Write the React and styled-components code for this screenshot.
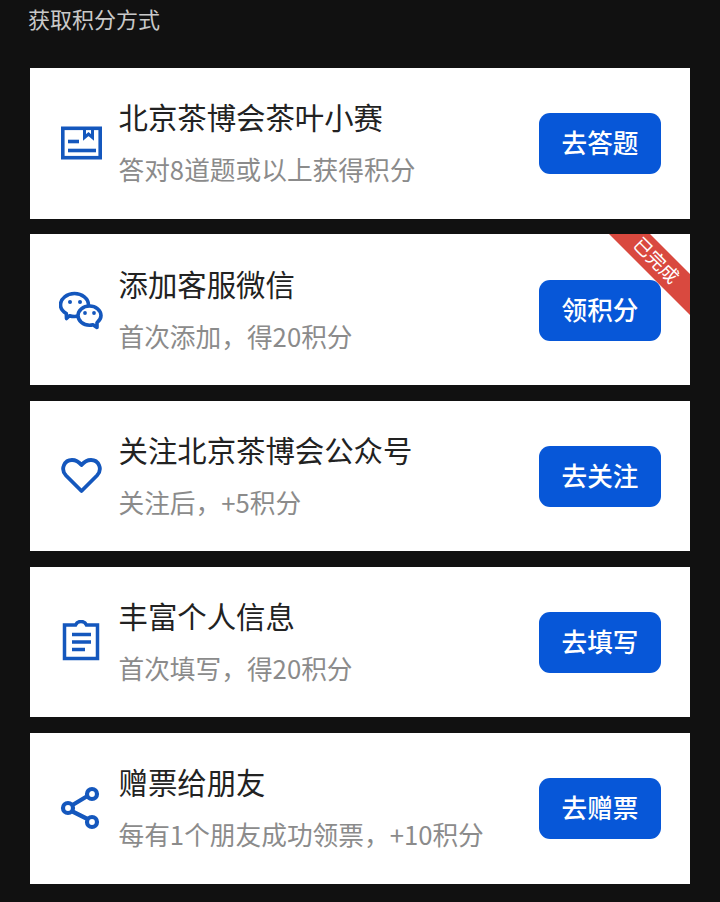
import styled, { createGlobalStyle } from 'styled-components'

const GlobalStyle = createGlobalStyle`
  html, body {
    margin: 0;
    padding: 0;
    background: #111111;
  }
  body {
    font-family: "Noto Sans CJK SC", "Noto Sans", sans-serif;
  }
`

const Page = styled.div`
  width: 720px;
  height: 902px;
  overflow: hidden;
  background: #111111;
  box-sizing: border-box;
  padding: 0 30px;
`

const Heading = styled.div`
  height: 68px;
  padding-top: 2px;
  box-sizing: border-box;
  margin-left: -2px;
  font-size: 22px;
  line-height: 32px;
  color: #c9c9c9;
`

const List = styled.div`
  display: flex;
  flex-direction: column;
  gap: 15.75px;
`

const Card = styled.div`
  position: relative;
  overflow: hidden;
  height: 150.5px;
  background: #ffffff;
  display: flex;
  align-items: center;
  padding: 0 29px;
  box-sizing: border-box;
`

const IconSlot = styled.div`
  flex: none;
  width: 44px;
  height: 44px;
  margin-right: 15.5px;
  color: #1457bd;
  svg {
    display: block;
  }
`

const Info = styled.div`
  flex: 1;
  min-width: 0;
  display: flex;
  flex-direction: column;
  gap: 11px;
  padding-bottom: 1px;
`

const Title = styled.div`
  font-size: 29.4px;
  line-height: 42px;
  color: #222222;
  white-space: nowrap;
`

const Sub = styled.div`
  font-size: 25.7px;
  line-height: 42px;
  color: #8b8b8b;
  white-space: nowrap;
`

const Action = styled.button`
  flex: none;
  width: 122px;
  height: 61px;
  margin-top: 1px;
  border: 0;
  border-radius: 11px;
  padding: 0 0 4px;
  background: #0757d8;
  color: #ffffff;
  font-family: inherit;
  font-size: 25.6px;
  font-weight: 500;
  line-height: 57px;
`

const Ribbon = styled.div`
  position: absolute;
  top: 15.5px;
  right: -29.5px;
  width: 120px;
  height: 29px;
  padding-right: 11px;
  box-sizing: border-box;
  background: #d9493f;
  color: #ffffff;
  font-size: 18.5px;
  line-height: 26px;
  text-align: center;
  transform: rotate(45deg);
`

const BookIcon = () => (
  <svg width="44" height="44" viewBox="0 0 44 44" fill="none" stroke="currentColor" strokeWidth="3.6">
    <rect x="3.8" y="7.3" width="37.4" height="29.4" />
    <path d="M25.5 7 V16.5 L29.5 13 L33.5 16.5 V7" strokeWidth="3" />
    <path d="M9 20.5 H20" />
    <path d="M9 29.5 H37" />
  </svg>
)

const WechatIcon = () => (
  <svg width="44" height="44" viewBox="0 0 44 44" fill="none" stroke="currentColor" strokeWidth="3.6" strokeLinejoin="round">
    <path d="M15.5 5.5 C23 5.5 29.5 10.5 29.5 17 C29.5 23.5 23 28.5 15.5 28.5 C13.5 28.5 12 28.2 10.5 27.7 L7.5 30.5 L7.3 25.5 C3.7 23.3 1.5 20.3 1.5 17 C1.5 10.5 8 5.5 15.5 5.5 Z" />
    <path d="M30.5 18 C36.8 18 42 22.4 42 27.6 C42 30.4 40.5 32.8 38 34.6 L38 39.5 L34 36.7 C32.9 37 31.7 37.2 30.5 37.2 C24.2 37.2 19 32.9 19 27.6 C19 22.4 24.2 18 30.5 18 Z" fill="#ffffff" />
    <g fill="currentColor" stroke="none">
      <circle cx="11" cy="14" r="2" />
      <circle cx="21" cy="14" r="2" />
      <circle cx="26" cy="25" r="1.9" />
      <circle cx="35" cy="25" r="1.9" />
    </g>
  </svg>
)

const HeartIcon = () => (
  <svg width="44" height="44" viewBox="0 0 44 44" fill="none" stroke="currentColor" strokeWidth="3.8" strokeLinejoin="round">
    <path d="M22.5 37 L7 21.5 C1 15 5.5 6 13 6 C17 6 20 8 22.5 11 C25 8 28 6 32 6 C39.5 6 44 15 38 21.5 Z" />
  </svg>
)

const ClipboardIcon = () => (
  <svg width="44" height="44" viewBox="0 0 44 44" fill="none" stroke="currentColor" strokeWidth="3.5">
    <path d="M5.5 5 H16.5 C17.5 2.8 19.5 1.5 22 1.5 C24.5 1.5 26.5 2.8 27.5 5 H38.5 V38.5 H5.5 Z" />
    <path d="M13 14.5 H32 M13 22 H32 M13 29.5 H26" strokeWidth="3.6" />
  </svg>
)

const ShareIcon = () => (
  <svg width="44" height="44" viewBox="0 0 44 44" fill="none" stroke="currentColor" strokeWidth="4.2">
    <path d="M13.5 19 L28.5 10 M13.5 25.5 L28.5 33" />
    <circle cx="33" cy="8" r="5" />
    <circle cx="9" cy="22" r="5" />
    <circle cx="33" cy="36" r="5" />
  </svg>
)

const tasks = [
  { icon: <BookIcon />, title: '北京茶博会茶叶小赛', sub: '答对8道题或以上获得积分', action: '去答题' },
  { icon: <WechatIcon />, title: '添加客服微信', sub: '首次添加，得20积分', action: '领积分', done: true },
  { icon: <HeartIcon />, title: '关注北京茶博会公众号', sub: '关注后，+5积分', action: '去关注' },
  { icon: <ClipboardIcon />, title: '丰富个人信息', sub: '首次填写，得20积分', action: '去填写' },
  { icon: <ShareIcon />, title: '赠票给朋友', sub: '每有1个朋友成功领票，+10积分', action: '去赠票' },
]

export default function App() {
  return (
    <>
      <GlobalStyle />
      <Page>
        <Heading>获取积分方式</Heading>
        <List>
          {tasks.map((task) => (
            <Card key={task.title}>
              <IconSlot>{task.icon}</IconSlot>
              <Info>
                <Title>{task.title}</Title>
                <Sub>{task.sub}</Sub>
              </Info>
              <Action>{task.action}</Action>
              {task.done ? <Ribbon>已完成</Ribbon> : null}
            </Card>
          ))}
        </List>
      </Page>
    </>
  )
}
